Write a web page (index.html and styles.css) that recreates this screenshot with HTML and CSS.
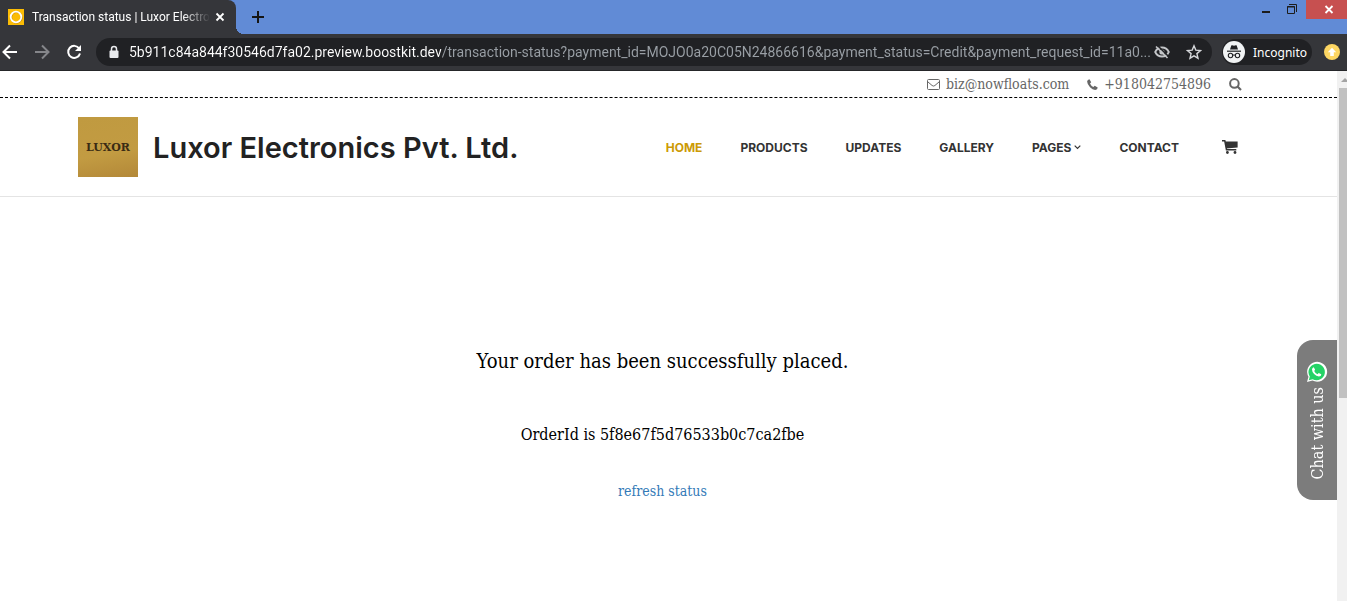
FILE: index.html
```
<!DOCTYPE html>
<html lang="en">
  <head>
    <meta charset="utf-8">
    <meta name="viewport" content="width=device-width, initial-scale=1.0">
    <title>Transaction status | Luxor Electronics Pvt. Ltd.</title>
    <link rel="stylesheet" href="styles.css">
  </head>
  <body>
    <div class="browser">
      <div class="tabStrip">
        <div class="tab">
          <svg width="16" height="16" viewBox="0 0 16 16">
            <rect width="16" height="16" fill="#fbbc05"/>
            <circle cx="8.4" cy="8.4" r="5.3" fill="none" stroke="#c98c00" stroke-width="2"/>
            <circle cx="8" cy="8" r="5.3" fill="none" stroke="#fff" stroke-width="1.8"/>
          </svg>
          <span class="tabTitle">Transaction status | Luxor Electro</span>
          <button class="iconButton" aria-label="Close tab">
            <svg width="16" height="16" viewBox="0 0 16 16"><path d="M4.5 4.5l7 7M11.5 4.5l-7 7" stroke="#fff" stroke-width="1.8"/></svg>
          </button>
        </div>
        <div class="tabCurve"></div>
        <button class="iconButton newTab" aria-label="New tab">
          <svg width="16" height="16" viewBox="0 0 16 16"><path d="M8 2v12M2 8h12" stroke="#151515" stroke-width="2"/></svg>
        </button>
        <div class="windowButtons">
          <button class="iconButton" aria-label="Minimize">
            <svg width="26" height="19" viewBox="0 0 26 19"><path d="M8 12h8" stroke="#1c1c1c" stroke-width="2"/></svg>
          </button>
          <button class="iconButton" aria-label="Restore">
            <svg width="26" height="19" viewBox="0 0 26 19"><path d="M7.500 6.500h7v7h-7zM7 7h8M9 4.500h7.500v7.500" fill="none" stroke="#1c1c1c"/></svg>
          </button>
          <button class="iconButton closeWindow" aria-label="Close">
            <svg width="41" height="19" viewBox="0 0 41 19"><path d="M19.500 6l7 7M26.500 6l-7 7" stroke="#fff" stroke-width="1.800"/></svg>
          </button>
        </div>
      </div>

      <div class="toolbar">
        <div class="navButtons">
          <button class="iconButton" aria-label="Back">
            <svg width="20" height="20" viewBox="0 0 20 20"><path d="M17 10H4M10 3.500L3.500 10l6.500 6.500" fill="none" stroke="#fff" stroke-width="2"/></svg>
          </button>
          <button class="iconButton" aria-label="Forward">
            <svg width="20" height="20" viewBox="0 0 20 20"><path d="M3 10h13M10 3.500l6.500 6.500-6.500 6.500" fill="none" stroke="#85868a" stroke-width="2"/></svg>
          </button>
          <button class="iconButton" aria-label="Reload">
            <svg width="20" height="20" viewBox="0 0 20 20"><path d="M15.200 6.500A6 6 0 1 0 16 11.500" fill="none" stroke="#fff" stroke-width="2"/><path d="M17 3v6h-6z" fill="#fff"/></svg>
          </button>
        </div>
        <div class="addressBar">
          <svg width="10" height="14" viewBox="0 0 10 14"><path d="M2.500 6V4a2.500 2.500 0 0 1 5 0v2" fill="none" stroke="#e8eaed" stroke-width="1.500"/><rect x="0.500" y="5.500" width="9" height="7.500" rx="1" fill="#e8eaed"/></svg>
          <input class="url" type="text" aria-label="Address" value="5b911c84a844f30546d7fa02.preview.boostkit.dev/transaction-status?payment_id=MOJO0a20C05N24866616&amp;payment_status=Credit&amp;payment_request_id=11a0...">
          <div class="addressIcons">
            <button class="iconButton" aria-label="Cookies blocked">
              <svg width="16" height="16" viewBox="0 0 16 16"><path d="M1.200 8C2.600 5 5 3.500 8 3.500S13.400 5 14.800 8C13.400 11 11 12.500 8 12.500S2.600 11 1.200 8z" fill="none" stroke="#c4c6c9" stroke-width="1.800"/><circle cx="8" cy="8" r="2.600" fill="#c4c6c9"/><path d="M3.500 1.500l11 11" stroke="#202124" stroke-width="1.600"/><path d="M2 2.500l11.500 11.500" stroke="#c4c6c9" stroke-width="1.600"/></svg>
            </button>
            <button class="iconButton" aria-label="Bookmark this page">
              <svg width="16" height="16" viewBox="0 0 16 16"><path d="M8 1.800l1.800 4.300 4.700.4-3.600 3.100 1.100 4.600L8 11.800l-4 2.400 1.100-4.600-3.600-3.100 4.700-.4z" fill="none" stroke="#d5d7da" stroke-width="1.400"/></svg>
            </button>
          </div>
        </div>
        <button class="incognito">
          <svg width="22" height="22" viewBox="0 0 22 22">
            <circle cx="11" cy="11" r="11" fill="#f1f3f4"/>
            <path d="M7 8.500l1.300-4q.2-.5.800-.3l1.900.5 1.900-.5q.6-.2.800.3l1.300 4z" fill="#202124"/>
            <path d="M4 10.200h14" stroke="#202124" stroke-width="1.200"/>
            <circle cx="7.500" cy="14.500" r="2.200" fill="none" stroke="#202124" stroke-width="1.100"/>
            <circle cx="14.500" cy="14.500" r="2.200" fill="none" stroke="#202124" stroke-width="1.100"/>
            <path d="M9.700 14.300q1.300-.8 2.600 0" fill="none" stroke="#202124"/>
          </svg>
          Incognito
        </button>
        <button class="iconButton" aria-label="Update">
          <svg width="16" height="16" viewBox="0 0 16 16"><circle cx="8" cy="8" r="8" fill="#fdd663"/><path d="M8 3.800l4.200 4.400H9.800V12H6.200V8.200H3.800z" fill="#fff"/></svg>
        </button>
      </div>
    </div>

    <div class="view">
      <div class="page">
        <div class="topBar">
          <a class="contact" href="#mail">
            <svg width="13" height="11" viewBox="0 0 13 11"><rect x=".5" y=".5" width="12" height="10" rx="1" fill="none" stroke="#666"/><path d="M.8 2.800l4.300 3.700q1.400 1.100 2.800 0l4.300-3.700" fill="none" stroke="#666"/></svg>
            biz@nowfloats.com
          </a>
          <a class="contact" href="#phone">
            <svg width="11" height="11" viewBox="0 0 11 11"><path d="M2.500.3L4.200 3.300 3 4.600Q4 7 6.400 8L7.700 6.800 10.700 8.500Q10.700 10.700 8.200 10.900 5.600 10.700 3 8.200.2 5.300.1 2.600.4.400 2.500.3z" fill="#666"/></svg>
            +918042754896
          </a>
          <button class="iconButton" aria-label="Search">
            <svg width="13" height="13" viewBox="0 0 13 13"><circle cx="5.400" cy="5.400" r="4.300" fill="none" stroke="#666" stroke-width="2"/><path d="M8.500 8.500l3.500 3.500" stroke="#666" stroke-width="2.200"/></svg>
          </button>
        </div>

        <header class="header">
          <div class="logo">LUXOR</div>
          <h1>Luxor Electronics Pvt. Ltd.</h1>
          <nav class="menu">
            <a class="active" href="#home">HOME</a>
            <a href="#products">PRODUCTS</a>
            <a href="#updates">UPDATES</a>
            <a href="#gallery">GALLERY</a>
            <a href="#pages">PAGES <svg width="7" height="5" viewBox="0 0 7 5"><path d="M.7.700l2.800 2.800L6.300.700" fill="none" stroke="#333" stroke-width="1.200"/></svg></a>
            <a href="#contact">CONTACT</a>
            <a class="cart" href="#cart" aria-label="Cart">
              <svg width="16" height="14" viewBox="0 0 16 14"><path d="M0 .8h2.800l1.700 9h9.800" fill="none" stroke="#333" stroke-width="1.500"/><path d="M3 1.500h12.600v6L4.200 8.600z" fill="#333"/><circle cx="5.400" cy="12.500" r="1.400" fill="#333"/><circle cx="13" cy="12.500" r="1.400" fill="#333"/></svg>
            </a>
          </nav>
        </header>

        <main class="status">
          <p class="message">Your order has been successfully placed.</p>
          <p class="order">OrderId is 5f8e67f5d76533b0c7ca2fbe</p>
          <a class="refresh" href="#refresh">refresh status</a>
        </main>

        <button class="chat">
          <span>Chat with us</span>
          <svg width="22" height="22" viewBox="0 0 22 22">
            <path d="M1 21l1.500-5.200A10 10 0 1 1 6.500 19.600z" fill="#fff"/>
            <path d="M2.800 19.200l1-3.700A8.200 8.200 0 1 1 6.700 18.200z" fill="#25d366"/>
            <path d="M7.800 6.200l1.300 2.600-.9 1.200q1.100 2.200 3.300 3.200l1.200-1.300 2.600 1.300q0 2.300-2.400 2.300-2.600-.2-4.800-2.500Q6 10.700 6 8.500q.2-2 1.800-2.300z" fill="#fff"/>
          </svg>
        </button>
      </div>
      <div class="scrollbar">
        <div class="scrollArrow"></div>
        <div class="scrollThumb"></div>
      </div>
    </div>
  </body>
</html>
```
FILE: styles.css
```
* {
  box-sizing: border-box;
}
body {
  margin: 0;
  min-height: 100vh;
  display: flex;
  flex-direction: column;
  background: #fff;
  font-family: "DejaVu Serif Condensed", "DejaVu Serif", serif;
}
a {
  text-decoration: none;
}
svg {
  display: block;
  flex: none;
}
.iconButton {
  flex: none;
  padding: 0;
  border: 0;
  background: none;
}

/* browser window */
.browser {
  font-family: "Noto Sans", "Open Sans", sans-serif;
  background: #35363a;
  border-bottom: 1px solid #252629;
}
.tabStrip {
  display: flex;
  height: 34px;
  background: #618bd6;
}
.tab {
  display: flex;
  align-items: center;
  justify-content: space-between;
  width: 236px;
  padding: 0 8px;
  background: #35363a;
  border-radius: 0 8px 0 0;
}
.tabTitle {
  white-space: nowrap;
  font-family: Roboto, sans-serif;
  font-size: 12px;
  color: #fff;
  padding-left: 6px;
  mask-image: linear-gradient(to right, #000 85%, transparent);
}
.tabCurve {
  align-self: flex-end;
  width: 8px;
  height: 8px;
  background: radial-gradient(circle at top right, #618bd6 8px, #35363a 8px);
}
.newTab {
  padding: 0 14px 0 6px;
}
.windowButtons {
  display: flex;
  align-items: flex-start;
  margin-left: auto;
}
.closeWindow {
  background: #c75050;
}
.toolbar {
  display: flex;
  align-items: center;
  height: 36px;
  padding-right: 7px;
}
.navButtons {
  display: flex;
  gap: 12px;
  width: 96px;
}
.addressBar {
  display: flex;
  flex: 1;
  align-items: center;
  height: 28px;
  padding: 0 10px 0 13px;
  border-radius: 14px;
  background: #202124;
}
.url {
  flex: 1;
  min-width: 0;
  margin-left: 10px;
  padding: 0;
  border: 0;
  outline: 0;
  font-family: Roboto, sans-serif;
  font-size: 14px;
  text-overflow: ellipsis;
  /* host is white, the path is grey */
  color: transparent;
  background: linear-gradient(to right, #fff 312px, #9aa0a6 312px);
  background-clip: text;
}
.addressIcons {
  display: flex;
  gap: 16px;
}
.incognito {
  display: flex;
  align-items: center;
  gap: 8px;
  height: 26px;
  margin: 0 12px 0 10px;
  padding: 0 5px 0 1px;
  border: 0;
  border-radius: 13px;
  background: #202124;
  color: #fff;
  font-family: inherit;
  font-size: 12px;
}

/* web page */
.view {
  display: flex;
  flex: 1;
}
.page {
  flex: 1;
  position: relative;
}
.topBar {
  display: flex;
  align-items: center;
  justify-content: flex-end;
  gap: 18px;
  height: 27px;
  padding-right: 95px;
  border-bottom: 1px dashed #000;
}
.contact {
  display: flex;
  align-items: center;
  gap: 6px;
  color: #666;
  font-size: 14px;
  line-height: 16px;
}
.header {
  display: flex;
  align-items: center;
  height: 99px;
  padding: 0 99px 0 78px;
  border-bottom: 1px solid #e4e4e4;
}
.logo {
  display: flex;
  align-items: center;
  justify-content: center;
  width: 60px;
  height: 60px;
  background: linear-gradient(170deg, #c09a40, #c29b42 60%, #b38838);
  color: #3a2b14;
  font-family: "DejaVu Serif", serif;
  font-size: 11px;
  font-weight: bold;
}
h1 {
  margin: 0 0 0 15px;
  color: #222;
  font-family: Inter, sans-serif;
  font-size: 29px;
  font-weight: 600;
  white-space: nowrap;
}
.menu {
  display: flex;
  align-items: center;
  gap: 38px;
  margin-left: auto;
}
.menu a {
  display: flex;
  align-items: center;
  gap: 3px;
  color: #333;
  font-family: Inter, sans-serif;
  font-size: 12px;
  font-weight: 700;
}
.menu .active {
  color: #cc9a06;
}
.menu .cart {
  padding-left: 5px;
}
.status {
  display: flex;
  flex-direction: column;
  align-items: center;
  padding: 149px 12px 20px 0;
  color: #000;
}
.message {
  margin: 0 0 47px;
  font-size: 20px;
  line-height: 30px;
}
.order {
  margin: 0 0 34px;
  font-size: 16px;
  line-height: 24px;
}
.refresh {
  color: #337ab7;
  font-size: 14px;
  line-height: 20px;
}
.chat {
  position: absolute;
  right: 0;
  top: 269px;
  display: flex;
  flex-direction: column-reverse;
  align-items: center;
  justify-content: center;
  gap: 4px;
  width: 40px;
  height: 160px;
  padding: 0;
  border: 0;
  border-radius: 16px 0 0 16px;
  background: #7c7c7c;
  color: #fff;
  font-family: inherit;
  font-size: 16px;
}
.chat span {
  writing-mode: vertical-rl;
  transform: rotate(180deg);
}
.scrollbar {
  display: flex;
  flex-direction: column;
  width: 10px;
  background: #f1f1f1;
  overflow: hidden;
}
.scrollArrow {
  height: 17px;
  padding: 7px 0 0 4px;
}
.scrollArrow::before {
  content: "";
  display: block;
  width: 0;
  border: 4px solid transparent;
  border-top: 0;
  border-bottom-color: #a3a3a3;
}
.scrollThumb {
  height: 310px;
  margin-left: 2px;
  background: #c1c1c1;
}
```
